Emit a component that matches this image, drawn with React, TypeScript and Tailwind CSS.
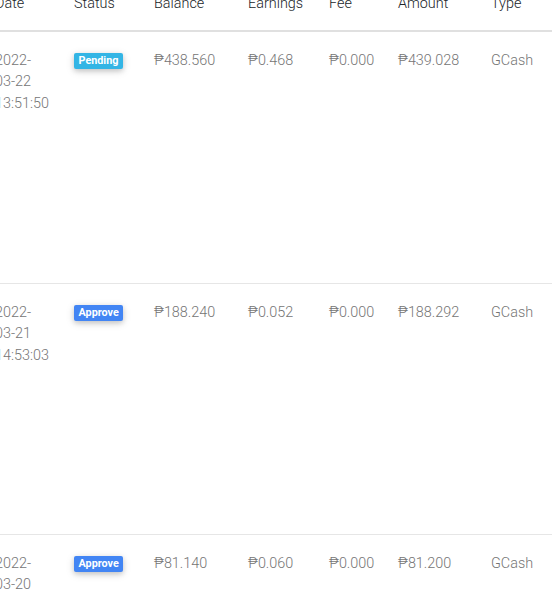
type Status = "Pending" | "Approve";

interface Withdrawal {
  date: string[];
  status: Status;
  balance: string;
  earnings: string;
  fee: string;
  amount: string;
  type: string;
}

const rows: Withdrawal[] = [
  {
    date: ["2022-", "03-22", "13:51:50"],
    status: "Pending",
    balance: "₱438.560",
    earnings: "₱0.468",
    fee: "₱0.000",
    amount: "₱439.028",
    type: "GCash",
  },
  {
    date: ["2022-", "03-21", "14:53:03"],
    status: "Approve",
    balance: "₱188.240",
    earnings: "₱0.052",
    fee: "₱0.000",
    amount: "₱188.292",
    type: "GCash",
  },
  {
    date: ["2022-", "03-20", "10:12:44"],
    status: "Approve",
    balance: "₱81.140",
    earnings: "₱0.060",
    fee: "₱0.000",
    amount: "₱81.200",
    type: "GCash",
  },
];

const cols = ["w-[81px] pl-[14px] pr-3", "w-[80px] px-3", "w-[94px] px-3", "w-[81px] px-3", "w-[69px] px-3", "w-[93px] px-3", "w-[80px] px-3"];

function Badge({ status }: { status: Status }) {
  const color = status === "Pending" ? "bg-[#33b5e5]" : "bg-[#4285f4]";
  return (
    <span
      className={`${color} inline-block rounded-[2px] px-[4.5px] py-[2.7px] text-[10.8px] font-bold leading-none text-white align-[1px] shadow-[0_2px_5px_0_rgba(0,0,0,0.16),0_2px_10px_0_rgba(0,0,0,0.12)]`}
    >
      {status}
    </span>
  );
}

export default function App() {
  const headers = ["Date", "Status", "Balance", "Earnings", "Fee", "Amount", "Type"];

  return (
    <div className="h-[600px] w-[552px] overflow-hidden bg-white font-['Roboto','Liberation_Sans',sans-serif] text-[14.4px] font-light leading-[1.5]">
      {/* table is scrolled, so it starts above and left of the view */}
      <div className="-ml-[19px] -mt-[25px] w-max">
        {/* Head */}
        <div className="flex border-b-2 border-[#e0e0e0] text-[#212529]">
          {headers.map((h, i) => (
            <div key={h} className={`${cols[i]} shrink-0 pt-[17.6px] pb-4`}>
              {h}
            </div>
          ))}
        </div>

        {/* Body */}
        {rows.map((r, idx) => (
          <div
            key={idx}
            className={`flex h-[251px] box-border text-[#757575] ${idx > 0 ? "border-t border-[#e6e6e6]" : ""}`}
          >
            <div className={`${cols[0]} shrink-0 pt-[17.6px]`}>
              {r.date.map((d) => (
                <div key={d}>{d}</div>
              ))}
            </div>
            <div className={`${cols[1]} shrink-0 pt-[17.6px]`}>
              <Badge status={r.status} />
            </div>
            <div className={`${cols[2]} shrink-0 pt-[17.6px]`}>{r.balance}</div>
            <div className={`${cols[3]} shrink-0 pt-[17.6px]`}>{r.earnings}</div>
            <div className={`${cols[4]} shrink-0 pt-[17.6px]`}>{r.fee}</div>
            <div className={`${cols[5]} shrink-0 pt-[17.6px]`}>{r.amount}</div>
            <div className={`${cols[6]} shrink-0 pt-[17.6px]`}>{r.type}</div>
          </div>
        ))}
      </div>
    </div>
  );
}
